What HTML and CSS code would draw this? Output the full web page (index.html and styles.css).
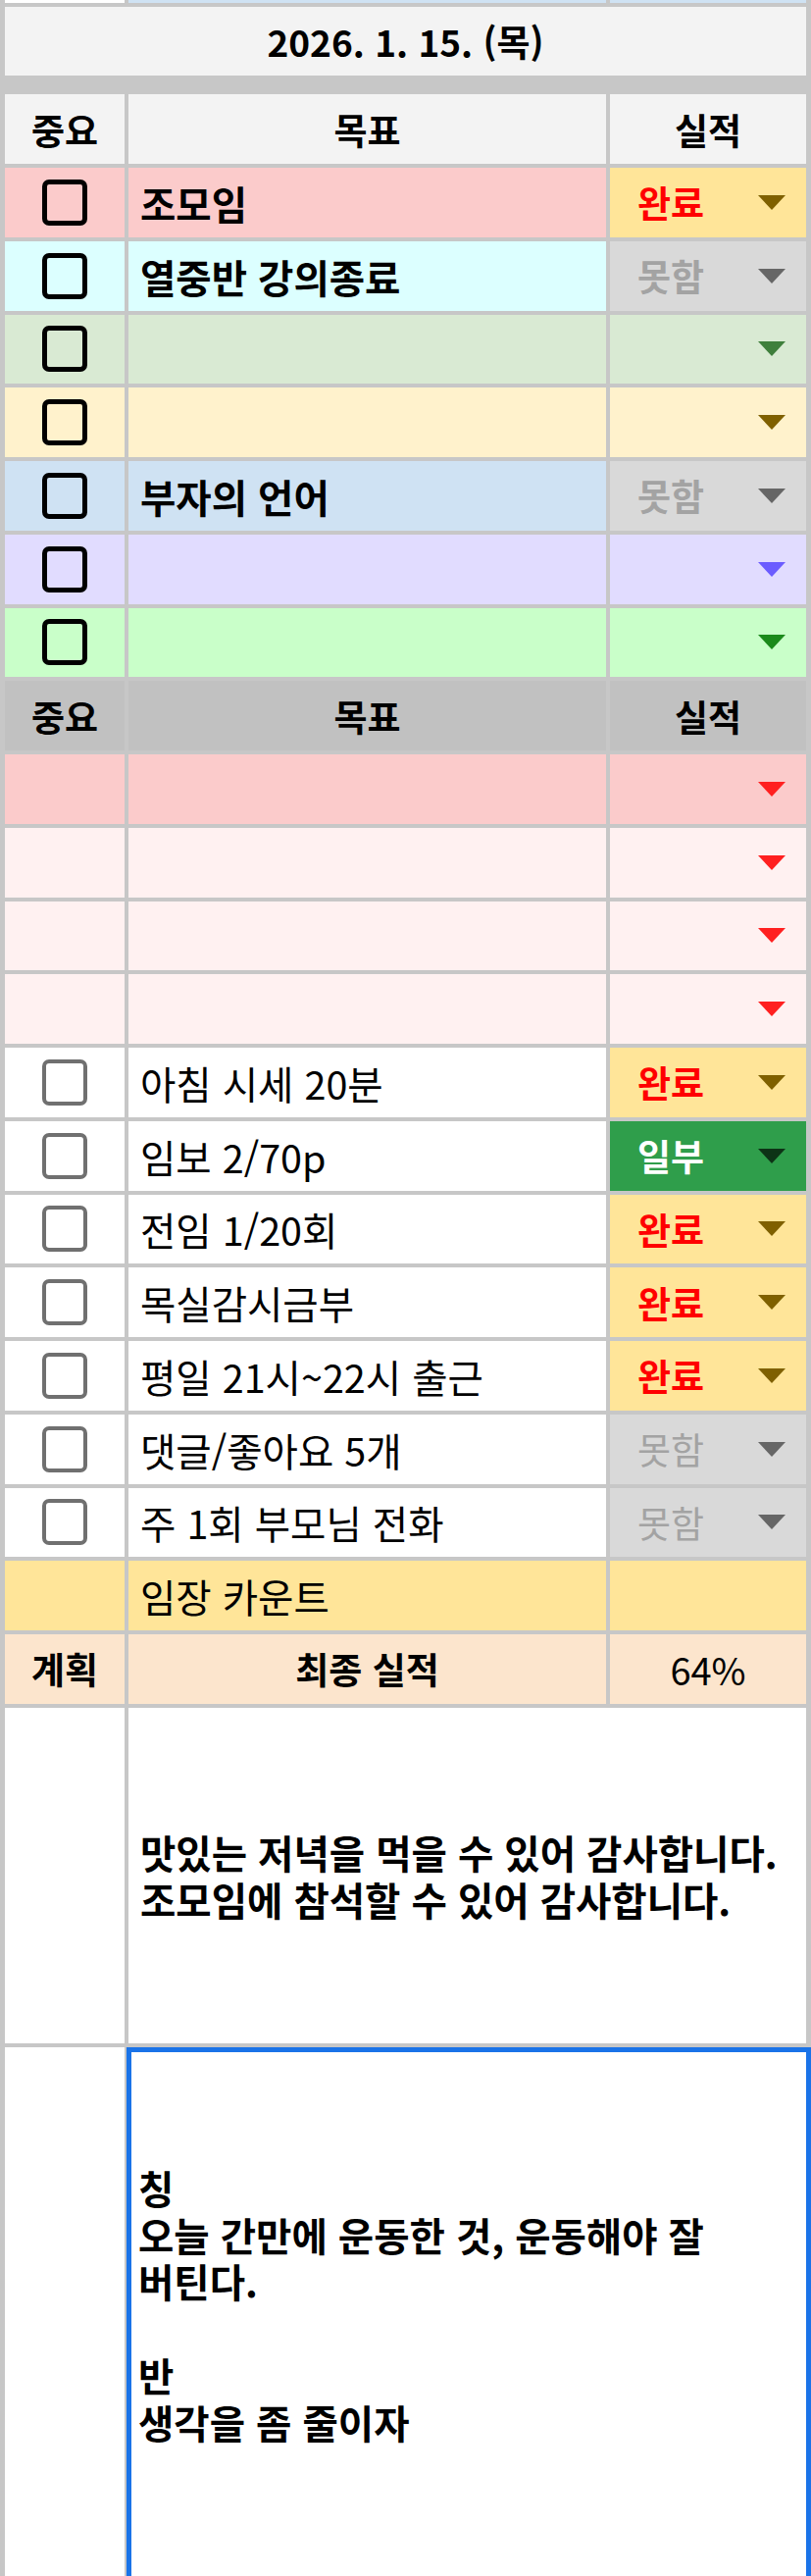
FILE: index.html
```html
<!DOCTYPE html>
<html lang="ko">
<head>
<meta charset="utf-8">
<title>2026. 1. 15. (목)</title>
<link rel="stylesheet" href="styles.css">
</head>
<body>
<div class="sheet">
  <div class="row row-top">
    <div class="c bg-white"></div><div class="c bg-lblue"></div><div class="c bg-lblue"></div>
  </div>
  <div class="row row-date">
    <div class="c span3 date">2026. 1. 15. (목)</div>
  </div>
  <div class="row row-head head-light">
    <div class="c hd">중요</div><div class="c hd">목표</div><div class="c hd">실적</div>
  </div>

  <div class="row r-pink">
    <div class="c chk"><span class="cb"></span></div>
    <div class="c goal b">조모임</div>
    <div class="c dd chip-done"><span class="v">완료</span><span class="arr"></span></div>
  </div>
  <div class="row r-cyan">
    <div class="c chk"><span class="cb"></span></div>
    <div class="c goal b">열중반 강의종료</div>
    <div class="c dd chip-no b"><span class="v">못함</span><span class="arr"></span></div>
  </div>
  <div class="row r-green">
    <div class="c chk"><span class="cb"></span></div>
    <div class="c goal b"></div>
    <div class="c dd"><span class="arr a-green"></span></div>
  </div>
  <div class="row r-yellow">
    <div class="c chk"><span class="cb"></span></div>
    <div class="c goal b"></div>
    <div class="c dd"><span class="arr a-brown"></span></div>
  </div>
  <div class="row r-blue">
    <div class="c chk"><span class="cb"></span></div>
    <div class="c goal b">부자의 언어</div>
    <div class="c dd chip-no b"><span class="v">못함</span><span class="arr"></span></div>
  </div>
  <div class="row r-purple">
    <div class="c chk"><span class="cb"></span></div>
    <div class="c goal b"></div>
    <div class="c dd"><span class="arr a-purple"></span></div>
  </div>
  <div class="row r-lime">
    <div class="c chk"><span class="cb"></span></div>
    <div class="c goal b"></div>
    <div class="c dd"><span class="arr a-lime"></span></div>
  </div>

  <div class="row head-dark">
    <div class="c hd">중요</div><div class="c hd">목표</div><div class="c hd">실적</div>
  </div>

  <div class="row r-pink">
    <div class="c"></div><div class="c"></div>
    <div class="c dd"><span class="arr a-red"></span></div>
  </div>
  <div class="row r-pale">
    <div class="c"></div><div class="c"></div>
    <div class="c dd"><span class="arr a-red"></span></div>
  </div>
  <div class="row r-pale">
    <div class="c"></div><div class="c"></div>
    <div class="c dd"><span class="arr a-red"></span></div>
  </div>
  <div class="row r-pale">
    <div class="c"></div><div class="c"></div>
    <div class="c dd"><span class="arr a-red"></span></div>
  </div>

  <div class="row r-white">
    <div class="c chk"><span class="cb cb-gray"></span></div>
    <div class="c goal">아침 시세 20분</div>
    <div class="c dd chip-done"><span class="v">완료</span><span class="arr"></span></div>
  </div>
  <div class="row r-white">
    <div class="c chk"><span class="cb cb-gray"></span></div>
    <div class="c goal">임보 2/70p</div>
    <div class="c dd chip-part"><span class="v">일부</span><span class="arr"></span></div>
  </div>
  <div class="row r-white">
    <div class="c chk"><span class="cb cb-gray"></span></div>
    <div class="c goal">전임 1/20회</div>
    <div class="c dd chip-done"><span class="v">완료</span><span class="arr"></span></div>
  </div>
  <div class="row r-white">
    <div class="c chk"><span class="cb cb-gray"></span></div>
    <div class="c goal">목실감시금부</div>
    <div class="c dd chip-done"><span class="v">완료</span><span class="arr"></span></div>
  </div>
  <div class="row r-white">
    <div class="c chk"><span class="cb cb-gray"></span></div>
    <div class="c goal">평일 21시~22시 출근</div>
    <div class="c dd chip-done"><span class="v">완료</span><span class="arr"></span></div>
  </div>
  <div class="row r-white">
    <div class="c chk"><span class="cb cb-gray"></span></div>
    <div class="c goal">댓글/좋아요 5개</div>
    <div class="c dd chip-no"><span class="v">못함</span><span class="arr"></span></div>
  </div>
  <div class="row r-white">
    <div class="c chk"><span class="cb cb-gray"></span></div>
    <div class="c goal">주 1회 부모님 전화</div>
    <div class="c dd chip-no"><span class="v">못함</span><span class="arr"></span></div>
  </div>

  <div class="row r-gold">
    <div class="c"></div>
    <div class="c goal">임장 카운트</div>
    <div class="c"></div>
  </div>
  <div class="row r-peach">
    <div class="c hd">계획</div>
    <div class="c hd">최종 실적</div>
    <div class="c pct">64%</div>
  </div>

  <div class="row r-white row-note">
    <div class="c"></div>
    <div class="c span2 note">맛있는 저녁을 먹을 수 있어 감사합니다.<br>조모임에 참석할 수 있어 감사합니다.</div>
  </div>
  <div class="row r-white row-last">
    <div class="c"></div>
    <div class="c span2 note note-sel">칭<br>오늘 간만에 운동한 것, 운동해야 잘<br>버틴다.<br><br>반<br>생각을 좀 줄이자</div>
  </div>
</div>
</body>
</html>
```

FILE: styles.css
```css
html, body {
  margin: 0;
  padding: 0;
  background: #ffffff;
}

.sheet {
  width: 827px;
  height: 2626px;
  box-sizing: border-box;
  padding: 0 5px;
  background: #c7c7c7;
  display: flex;
  flex-direction: column;
  gap: 4px;
  overflow: hidden;
  font-family: "Noto Sans CJK KR", "Liberation Sans", sans-serif;
  color: #000;
}

.row {
  display: grid;
  grid-template-columns: 122px 487px 200px;
  column-gap: 4px;
  height: 70.75px;
  flex: none;
}

.c {
  display: flex;
  align-items: center;
  min-width: 0;
  box-sizing: border-box;
  white-space: nowrap;
}

.span3 { grid-column: 1 / 4; }
.span2 { grid-column: 2 / 4; }

.row-top { height: 3px; }
.bg-white { background: #ffffff; }
.bg-lblue { background: #cfe2f3; }

.row-date {
  height: 70px;
  margin-bottom: 15px;
}
.date {
  background: #f3f3f3;
  justify-content: center;
  font-size: 37px;
  font-weight: 700;
}

.row-head { height: 71px; }
.head-light .c { background: #f3f3f3; }
.head-dark .c { background: #c1c1c1; }

.hd {
  justify-content: center;
  font-size: 37px;
  font-weight: 700;
}

.goal {
  padding-left: 12px;
  font-size: 39.5px;
}
.b { font-weight: 700; }

.chk { justify-content: center; }
.cb {
  display: block;
  width: 46px;
  height: 47px;
  box-sizing: border-box;
  border: 5px solid #000;
  border-radius: 7px;
}
.cb-gray {
  border: 4px solid #707070;
  border-radius: 7px;
}

.dd {
  padding: 0 21px 0 28px;
  font-size: 37px;
}
.dd .v { flex: none; }
.arr {
  margin-left: auto;
  width: 0;
  height: 0;
  border-left: 14px solid transparent;
  border-right: 14px solid transparent;
  border-top: 15px solid #7f6000;
}

/* row colours */
.r-pink .c { background: #fbcbcb; }
.r-cyan .c { background: #dcffff; }
.r-green .c { background: #d9ead3; }
.r-yellow .c { background: #fff2cc; }
.r-blue .c { background: #cfe2f3; }
.r-purple .c { background: #e1dcff; }
.r-lime .c { background: #c9ffc9; }
.r-pale .c { background: #fff1f1; }
.r-white .c { background: #ffffff; }
.r-gold .c { background: #ffe599; }
.r-peach .c { background: #fce5cd; }

/* chips */
.row .chip-done { background: #ffe599; color: #ff0000; font-weight: 700; }
.chip-done .arr { border-top-color: #7f6000; }
.row .chip-no { background: #d9d9d9; color: #a3a3a3; }
.chip-no .arr { border-top-color: #666666; }
.row .chip-part { background: #2f9e4b; color: #ffffff; font-weight: 700; }
.chip-part .arr { border-top-color: #0d3316; }

.a-green { border-top-color: #3f7f3c; }
.a-brown { border-top-color: #7f6000; }
.a-purple { border-top-color: #6b5cff; }
.a-lime { border-top-color: #1b8a1b; }
.a-red { border-top-color: #ff2020; }

.pct {
  justify-content: center;
  font-size: 38px;
}

.row-note { height: 342px; }
.note {
  padding-left: 12px;
  font-size: 39.5px;
  font-weight: 700;
  line-height: 47.75px;
}

.row-last {
  flex: 1 1 auto;
  height: auto;
}
.note-sel {
  align-items: flex-start;
  margin: 0 -5px 0 -2px;
  border: 5px solid #1a73e8;
  border-bottom: none;
  padding: 114px 0 0 7px;
}
```
